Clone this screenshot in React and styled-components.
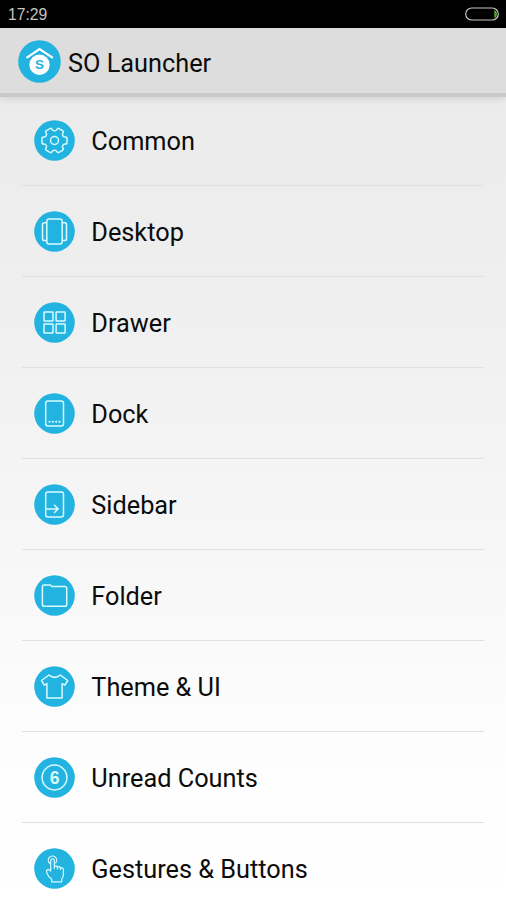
import React from "react"
import styled, { createGlobalStyle } from "styled-components"

const COLORS = {
  blue: "#22b3e0",
  icon: "#d9fbff",
  text: "#0c0c0c",
  bar: "#dddddd",
  barEdge: "#c9c9c9",
  divider: "#e0e0e0",
}

const GlobalStyle = createGlobalStyle`
  * {
    box-sizing: border-box;
  }
  body {
    margin: 0;
    overflow: hidden;
    font-family: Roboto, sans-serif;
    color: ${COLORS.text};
  }
`

const Screen = styled.div`
  width: 506px;
  height: 900px;
  display: flex;
  flex-direction: column;
  overflow: hidden;
  background: linear-gradient(#ebebeb 90px, #efefef 300px, #f7f7f7 560px, #fdfdfd 740px, #ffffff 900px);
`

const StatusBar = styled.div`
  flex: none;
  height: 28px;
  padding: 0 7px 0 8px;
  display: flex;
  align-items: center;
  justify-content: space-between;
  background-color: #000;
`

const Clock = styled.time`
  padding-top: 2px;
  font-family: "Liberation Sans", sans-serif;
  font-size: 15.7px;
  line-height: 20px;
  color: #c4c4c4;
`

const Header = styled.header`
  flex: none;
  height: 69px;
  padding: 1px 18px 0;
  display: flex;
  align-items: center;
  gap: 7px;
  background-color: ${COLORS.bar};
  border-bottom: 4px solid ${COLORS.barEdge};
  box-shadow: 0 2px 7px rgba(0, 0, 0, 0.1);
`

const Title = styled.h1`
  margin: 5px 0 0;
  font-size: 25.3px;
  font-weight: 400;
  line-height: 32px;
  white-space: nowrap;
`

const List = styled.ul`
  flex: none;
  list-style: none;
  margin: -2px 0 0;
  padding: 0 22px;
`

const Row = styled.li`
  height: 91px;
  padding-left: 12.3px;
  display: flex;
  align-items: center;
  gap: 16px;
  border-bottom: 1px solid ${COLORS.divider};
`

const Label = styled.span`
  padding-top: 4px;
  font-size: 25.3px;
  line-height: 32px;
  white-space: nowrap;
`

const Disc = styled.svg`
  flex: none;
  width: ${({ $size }) => $size}px;
  height: ${({ $size }) => $size}px;
  fill: none;
  stroke: ${COLORS.icon};
  stroke-width: 1.5;
  stroke-linecap: round;
  stroke-linejoin: round;
  text {
    font-family: "Liberation Sans", sans-serif;
    font-weight: 700;
    text-anchor: middle;
    stroke: none;
  }
`

// every glyph is drawn around 0,0, the middle of its disc
const Badge = ({ size = 41, children }) => (
  <Disc $size={size} viewBox={`${-size / 2} ${-size / 2} ${size} ${size}`} aria-hidden="true">
    <circle r={size / 2 - 0.2} fill={COLORS.blue} stroke="none" />
    {children}
  </Disc>
)

const gearPath = () => {
  const points = []
  for (let tooth = 0; tooth < 6; tooth++) {
    const corners = [[-16, 13], [16, 13], [20, 9.8], [40, 9.8]]
    corners.forEach(([angle, radius]) => {
      const a = ((tooth * 60 + angle) * Math.PI) / 180
      points.push([radius * Math.cos(a), radius * Math.sin(a)])
    })
  }
  // cut each corner short and round it with a quadratic curve
  const toward = (p, q) => {
    const t = Math.min(0.5, 1.5 / Math.hypot(q[0] - p[0], q[1] - p[1]))
    return `${(p[0] + (q[0] - p[0]) * t).toFixed(2)} ${(p[1] + (q[1] - p[1]) * t).toFixed(2)}`
  }
  const segments = points.map((p, i) => {
    const prev = points[(i + points.length - 1) % points.length]
    const next = points[(i + 1) % points.length]
    return `${i ? "L" : "M"}${toward(p, prev)}Q${p[0].toFixed(2)} ${p[1].toFixed(2)} ${toward(p, next)}`
  })
  return segments.join("") + "Z"
}

const Gear = () => (
  <>
    <path d={gearPath()} />
    <circle r="4" />
  </>
)

const Desktop = () => (
  <>
    <rect x="-7.7" y="-12.5" width="15.4" height="25" rx="2.2" />
    <path d="M-8-8.7H-10.2Q-12-8.7-12-6.9V7.3Q-12 9.1-10.2 9.1H-8M8-8.7H10.2Q12-8.7 12-6.9V7.3Q12 9.1 10.2 9.1H8" />
  </>
)

const Drawer = () => (
  <>
    <rect x="-10.5" y="-10.5" width="9" height="9" rx="0.5" />
    <rect x="1.6" y="-10.5" width="9" height="9" rx="0.5" />
    <rect x="-10.5" y="1.6" width="9" height="9" rx="0.5" />
    <rect x="1.6" y="1.6" width="9" height="9" rx="0.5" />
  </>
)

const Phone = () => <rect x="-8.8" y="-12.5" width="17.8" height="25" rx="2.2" />

const Dock = () => (
  <>
    <Phone />
    <path d="M-5 8.3H-4.8M-1.7 8.3H-1.5M1.6 8.3H1.8M4.9 8.3H5.1" strokeWidth="2" />
  </>
)

const Sidebar = () => (
  <>
    <Phone />
    <path d="M-8.8 4.4H3.6M0 0.8L3.6 4.4L0 8" />
  </>
)

const Folder = () => (
  <path d="M-10.5-10.6H-4.6L-2.4-9H10.4Q12.2-9 12.2-7.2V8.9Q12.2 10.7 10.4 10.7H-10.3Q-12.1 10.7-12.1 8.9V-9Q-12.1-10.6-10.5-10.6Z" />
)

const Shirt = () => (
  <path d="M-5.4-11.5L-13-6L-10.2-1.4L-7.6-2.8V11.5H7.6V-2.8L10.4-1.4L13.2-6L5.8-11.5Q0-6.8-5.4-11.5Z" />
)

const Count = () => (
  <>
    <circle r="12.4" />
    <text y="6.3" fontSize="17.5" fill={COLORS.icon}>6</text>
  </>
)

const Touch = () => (
  <>
    <path d="M-4.9-5.2A4.2 4.2 0 1 1 1.2-5.6" strokeWidth="1.2" />
    <path
      strokeWidth="1.2"
      d="M-3.8 2.6V-8.2Q-3.6-9.7-2-9.7Q-.3-9.7-.2-8.2V0V-2.2Q1.3-3.2 2.9-1.8V.4V-1.6Q4.4-2.6 6-1V1V-.6Q8.7-1.2 8.9 1.2V6.5Q8.8 8.3 7.2 10.6V13.4H-2.8V10.7Q-6.5 8-7.6 4.6L-8 2.2Q-6-.2-3.8 2.6Z"
    />
  </>
)

const Logo = () => (
  <Badge size={43}>
    <path d="M-13-3.7L0-12.5L13.4-3.7" stroke="#fff" strokeWidth="2.2" strokeLinecap="butt" strokeLinejoin="miter" />
    <circle cy="3.2" r="10.2" fill="#fff" stroke="none" />
    <text y="7.8" fontSize="13.5" fill={COLORS.blue}>S</text>
  </Badge>
)

const Battery = () => (
  <svg width="34" height="14" viewBox="0 0 34 14" fill="none" aria-hidden="true">
    <path d="M29.3 2.8V11.2Q32 10 32 7T29.3 2.8Z" fill="#58a532" />
    <rect x="0.7" y="1" width="32.6" height="12" rx="6" stroke="#c4c4c4" strokeWidth="1.2" />
  </svg>
)

const items = [
  { label: "Common", Icon: Gear },
  { label: "Desktop", Icon: Desktop },
  { label: "Drawer", Icon: Drawer },
  { label: "Dock", Icon: Dock },
  { label: "Sidebar", Icon: Sidebar },
  { label: "Folder", Icon: Folder },
  { label: "Theme & UI", Icon: Shirt },
  { label: "Unread Counts", Icon: Count },
  { label: "Gestures & Buttons", Icon: Touch },
]

const App = () => {
  return (
    <Screen>
      <GlobalStyle />
      <StatusBar>
        <Clock>17:29</Clock>
        <Battery />
      </StatusBar>
      <Header>
        <Logo />
        <Title>SO Launcher</Title>
      </Header>
      <List>
        {items.map(({ label, Icon }) => (
          <Row key={label}>
            <Badge>
              <Icon />
            </Badge>
            <Label>{label}</Label>
          </Row>
        ))}
      </List>
    </Screen>
  )
}

export default App
